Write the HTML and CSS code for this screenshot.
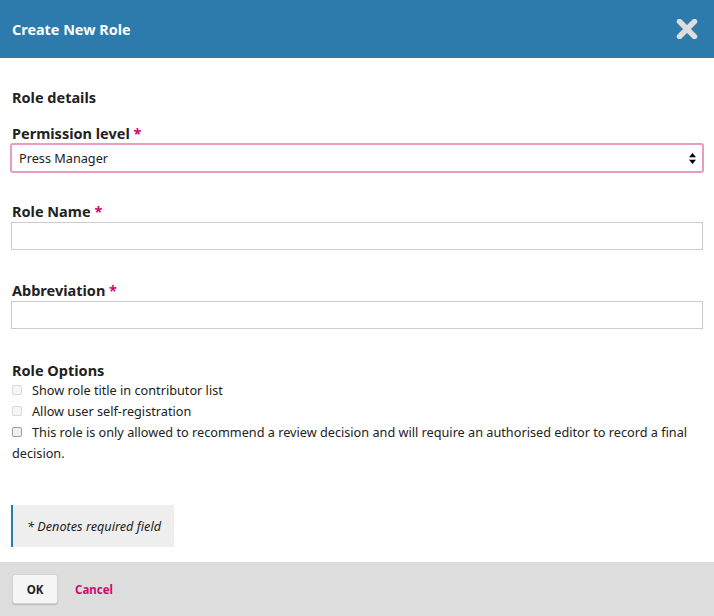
FILE: index.html
```html
<!DOCTYPE html>
<html>
<head>
<meta charset="utf-8">
<link rel="stylesheet" href="styles.css">
</head>
<body>
<div class="modal">
  <header class="modal-header">
    <h1 class="modal-title">Create New Role</h1>
    <button class="close" aria-label="Close">
      <svg width="22" height="20" viewBox="0 0 22 20"><path d="M3.5 2.5 L18.5 17.5 M18.5 2.5 L3.5 17.5" stroke="#dddddd" stroke-width="5.5" stroke-linecap="round"/></svg>
    </button>
  </header>
  <form class="modal-body">
    <h2 class="section-title">Role details</h2>
    <div class="field">
      <label class="label">Permission level <span class="req">*</span></label>
      <div class="select">
        <span class="select-value">Press Manager</span>
        <svg class="arrows" width="7" height="11" viewBox="0 0 7 11"><path d="M3.5 0 L7 4.3 H0 Z M3.5 11 L7 6.7 H0 Z" fill="#000"/></svg>
      </div>
    </div>
    <div class="field first">
      <label class="label">Role Name <span class="req">*</span></label>
      <div class="input"></div>
    </div>
    <div class="field spaced">
      <label class="label">Abbreviation <span class="req">*</span></label>
      <div class="input"></div>
    </div>
    <div class="options">
      <h3 class="label">Role Options</h3>
      <label class="check"><span class="box light"></span>Show role title in contributor list</label>
      <label class="check"><span class="box light"></span>Allow user self-registration</label>
      <label class="check wrap"><span class="box"></span>This role is only allowed to recommend a review decision and will require an authorised editor to record a final decision.</label>
    </div>
    <div class="notice">* Denotes required field</div>
  </form>
  <footer class="modal-footer">
    <button class="ok">OK</button>
    <a class="cancel" href="#">Cancel</a>
  </footer>
</div>
</body>
</html>
```

FILE: styles.css
```css
html, body {
  margin: 0;
  padding: 0;
  background: #fff;
}
body {
  font-family: "Noto Sans", "Open Sans", sans-serif;
  color: #222;
  font-size: 12.7px;
}
.modal {
  width: 714px;
  height: 616px;
  display: flex;
  flex-direction: column;
}
.modal-header {
  height: 58px;
  flex: none;
  background: #2d7aad;
  display: flex;
  align-items: center;
  justify-content: space-between;
  padding: 0 16px 0 12px;
  box-sizing: border-box;
}
.modal-title {
  margin: 0;
  color: #fff;
  font-size: 14.4px;
  font-weight: 700;
}
.close {
  border: 0;
  background: none;
  padding: 0;
  display: flex;
}
.modal-body {
  flex: 1;
  padding: 29px 11px 0 11px;
  margin: 0;
}
.section-title {
  margin: 0 1px 16px;
  font-size: 14.5px;
  font-weight: 700;
  line-height: 20px;
}
.label {
  display: block;
  margin: 0 1px;
  font-size: 14.5px;
  font-weight: 700;
  line-height: 20px;
}
.req {
  color: #d00a6c;
}
.field.first {
  margin-top: 28px;
}
.field.spaced {
  margin-top: 30px;
}
.field .input {
  margin-top: 1px;
}
.select {
  height: 26px;
  border: 2px solid #e99cc2;
  border-radius: 3px;
  display: flex;
  align-items: center;
  justify-content: space-between;
  padding: 0 6px 0 7px;
  margin: 0 -1px;
}
.select-value {
  font-size: 12.7px;
  color: #222;
}
.input {
  height: 26px;
  border: 1px solid #cccccc;
}
.options {
  margin-top: 31px;
}
.check {
  display: block;
  position: relative;
  padding-left: 20px;
  margin-left: 1px;
  font-size: 12.7px;
  line-height: 21px;
  color: #222;
}
.check.wrap {
  padding-left: 0;
  text-indent: 20px;
}
.box {
  position: absolute;
  left: 0;
  top: 5px;
  width: 8px;
  height: 8px;
  border: 1px solid #c4c4c4;
  border-radius: 2px;
  background: #f2f2f2;
}
.box.light {
  border-color: #d8d8d8;
  background: #f6f6f6;
}
.check.wrap .box {
  border-color: #a0a0a0;
  background: #efefef;
}
.notice {
  display: inline-block;
  margin-top: 41px;
  background: #eeeeee;
  border-left: 2px solid #2d7aad;
  padding: 0 13px 0 14px;
  height: 42px;
  line-height: 42px;
  font-style: italic;
  font-size: 12.7px;
  color: #222;
}
.modal-footer {
  height: 54px;
  flex: none;
  background: #dddddd;
  display: flex;
  align-items: center;
  padding: 0 12px;
  gap: 17px;
}
.ok {
  width: 46px;
  height: 30px;
  border: 1px solid #d2d2d2;
  border-radius: 3px;
  background: #f5f5f5;
  box-shadow: 0 1px 1px #b8b8b8;
  font-family: inherit;
  font-size: 11.5px;
  font-weight: 700;
  color: #222;
  padding: 0;
}
.cancel {
  color: #d00a6c;
  font-weight: 700;
  font-size: 11.5px;
  text-decoration: none;
}
```
